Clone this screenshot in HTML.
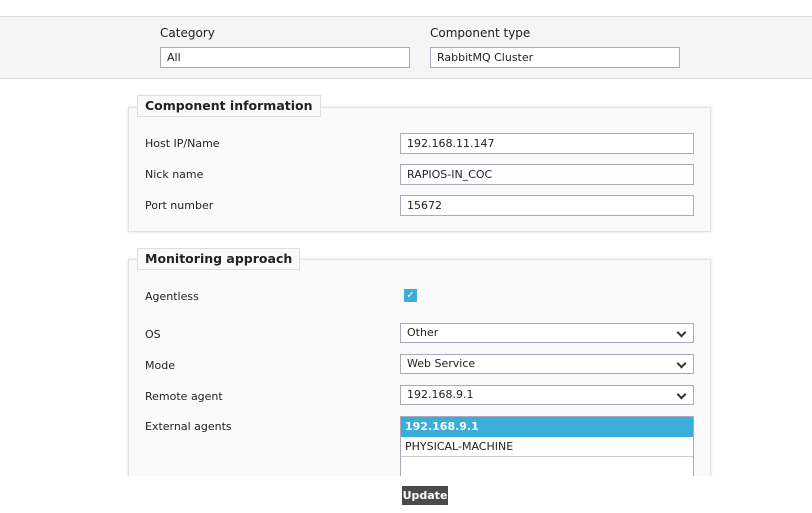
<!DOCTYPE html>
<html><head><style>
*{box-sizing:border-box;margin:0;padding:0}
body{width:812px;height:513px;overflow:hidden;background:#fff;font-family:"DejaVu Sans","Liberation Sans",sans-serif;font-size:11px;color:#222;position:relative}
.a{position:absolute}
.band{left:0;top:16px;width:812px;height:63px;background:#f5f5f5;border-top:1px solid #ddd;border-bottom:1px solid #ddd}
.lbl{font-size:12px}
.in{background:#fff;border:1px solid #aab;height:21px;padding:3px 6px;font-size:11px}
.panel{left:128px;width:583px;background:#fafafa;border:1px solid #e3e3e3;box-shadow:0 0 3px #ddd}
.leg{background:#fafafa;border:1px solid #ddd;font-weight:bold;font-size:12.5px;padding:2px 7px;height:22px}
.sel::after{content:"";position:absolute;right:8px;top:5px;width:5px;height:5px;border-right:2px solid #333;border-bottom:2px solid #333;transform:rotate(45deg)}
</style></head><body>
<div class="a band"></div>
<div class="a lbl" style="left:160px;top:26px">Category</div>
<div class="a in" style="left:160px;top:47px;width:250px">All</div>
<div class="a lbl" style="left:430px;top:26px">Component type</div>
<div class="a in" style="left:430px;top:47px;width:250px">RabbitMQ Cluster</div>

<div class="a panel" style="top:107px;height:125px"></div>
<div class="a leg" style="left:137px;top:95px">Component information</div>
<div class="a" style="left:145px;top:137px">Host IP/Name</div>
<div class="a in" style="left:400px;top:133px;width:294px">192.168.11.147</div>
<div class="a" style="left:145px;top:168px">Nick name</div>
<div class="a in" style="left:400px;top:164px;width:294px">RAPIOS-IN_COC</div>
<div class="a" style="left:145px;top:199px">Port number</div>
<div class="a in" style="left:400px;top:195px;width:294px">15672</div>

<div class="a panel" style="top:259px;height:230px"></div>
<div class="a leg" style="left:137px;top:248px">Monitoring approach</div>
<div class="a" style="left:145px;top:290px">Agentless</div>
<div class="a" style="left:404px;top:289px;width:13px;height:13px;background:#3badd9;color:#fff;font-size:10px;line-height:13px;text-align:center">✓</div>
<div class="a" style="left:145px;top:328px">OS</div>
<div class="a in sel" style="left:400px;top:323px;width:294px;height:20px;padding-top:2px">Other</div>
<div class="a" style="left:145px;top:359px">Mode</div>
<div class="a in sel" style="left:400px;top:354px;width:294px;height:20px;padding-top:2px">Web Service</div>
<div class="a" style="left:145px;top:390px">Remote agent</div>
<div class="a in sel" style="left:400px;top:385px;width:294px;height:20px;padding-top:2px">192.168.9.1</div>
<div class="a" style="left:145px;top:420px">External agents</div>
<div class="a" style="left:400px;top:416px;width:294px;height:70px;background:#fff;border:1px solid #aab">
 <div style="background:#3badd9;color:#fff;font-weight:bold;height:20px;padding:3px 4px">192.168.9.1</div>
 <div style="height:20px;padding:3px 4px;border-bottom:1px solid #ccc">PHYSICAL-MACHINE</div>
</div>
<div class="a" style="left:0;top:476px;width:812px;height:37px;background:#fff"></div>
<div class="a" style="left:402px;top:486px;width:46px;height:19px;background:#4a4a4a;color:#fff;font-weight:bold;font-size:11px;line-height:19px;text-align:center">Update</div>
</body></html>
